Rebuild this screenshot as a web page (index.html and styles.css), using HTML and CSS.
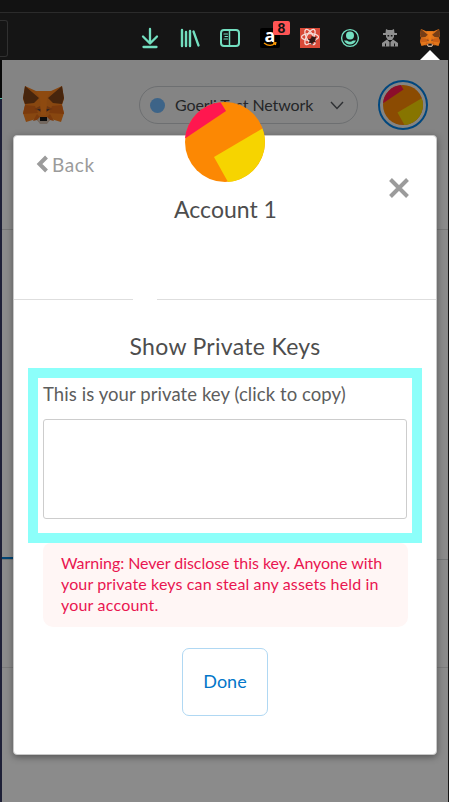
FILE: index.html
```html
<!DOCTYPE html>
<html lang="en">
<head>
<meta charset="utf-8">
<title>Show Private Keys</title>
<link rel="stylesheet" href="styles.css">
</head>
<body>
<svg class="defs" width="0" height="0">
  <symbol id="fox" viewBox="0 0 41 38" preserveAspectRatio="none">
    <path fill="#e2761b" d="M2 0 13 5H28L39 0 41 13 39 19 41 27 38 36 28 33 24 37H17L13 33 3 36 0 27 2 19 0 13Z"/>
    <path fill="#cd6116" d="M2 19 12 20 15 27 0 28ZM39 19 29 20 26 27 41 28ZM14 28 17 31 14 34 10 35ZM27 28 24 31 27 34 31 35Z"/>
    <path fill="#ec7c1b" d="M13 5H28L24 12 23 29H18L17 12Z"/>
    <path fill="#763d16" d="M2 0 16 12 11 17 2 18 0 12ZM39 0 25 12 30 17 39 18 41 12Z"/>
    <path fill="#b85a1c" d="M17 20 11 23 18 26ZM24 20 30 23 23 26Z"/>
    <path fill="#233447" d="M14 23 17.500 23.500 17 25ZM27 23 23.500 23.500 24 25Z"/>
    <path fill="#c0ad9e" d="M14 34 17 31H24L27 34 24 38H17Z"/>
    <path fill="#161616" d="M17 31H24V35H17Z"/>
  </symbol>
  <symbol id="avatar" viewBox="0 0 80 80">
    <circle cx="40" cy="40" r="40" fill="#fc8803"/>
    <path fill="#ff174f" d="M0 36.500A40 40 0 0 1 35.500 .2L41 9Z"/>
    <path fill="#f6d400" d="M77.500 26.500 29 55 43 80A40 40 0 0 0 77.500 26.500Z"/>
  </symbol>
</svg>

<header class="browser">
  <div class="tabs"></div>
  <div class="toolbar">
    <div class="urlbar"></div>
    <div class="tools">
      <svg width="20" height="22" viewBox="0 0 20 22" class="line"><path d="M10 2V16M3 9.500 10 16.500 17 9.500M3.500 20H16.500" stroke-width="2.300"/></svg>
      <svg width="20" height="22" viewBox="0 0 20 22" class="line"><path d="M2 3V19M6 5V19M10 4V19" stroke-width="2.400"/><path d="M13.500 4.500 18.500 18.500" stroke-width="2.300"/></svg>
      <svg width="20" height="22" viewBox="0 0 20 22" class="line thin"><rect x="1" y="3" width="18" height="16" rx="3"/><path d="M9.500 3V19" stroke-width="1.500"/><path d="M4 7H7.500M5 9.500H7.500M4 12H7.500" stroke-width="1.200"/></svg>
      <div class="amazon"><span class="letter">a</span><svg class="smile" width="14" height="5" viewBox="0 0 14 5"><path d="M1 1Q7 5.500 12 1.500M10 .8 12.800 .7 12.300 3" fill="none" stroke="#ff9900" stroke-width="1.300"/></svg><span class="badge">8</span></div>
      <svg width="20" height="22" viewBox="0 0 20 22"><path fill="#d94a38" d="M0 1H20V21H0Z"/><g fill="none" stroke="#f5dcd8" stroke-width="1.300"><ellipse cx="10" cy="10" rx="8.500" ry="3.400"/><ellipse cx="10" cy="10" rx="8.500" ry="3.400" transform="rotate(60 10 10)"/><ellipse cx="10" cy="10" rx="8.500" ry="3.400" transform="rotate(120 10 10)"/></g><ellipse cx="12.500" cy="13" rx="2.500" ry="3.700" fill="#301815" transform="rotate(40 12.500 13)"/><path d="M8 12 16 15M9 16 16 10M12 9V18" stroke="#301815"/></svg>
      <svg width="20" height="22" viewBox="0 0 20 22"><circle cx="10" cy="11" r="8.400" fill="none" stroke="#73dfc0" stroke-width="1.400"/><circle cx="10" cy="8.500" r="4" fill="#73dfc0"/><path fill="#73dfc0" d="M4 13.500H7Q10 16 13 13.500H16Q14 17.500 10 17.500T4 13.500Z"/></svg>
      <svg width="20" height="22" viewBox="0 0 20 22" fill="#919191"><path d="M6 2 8 3H12L14 2 14.500 6H17V8H14V10L12 13H8L6 10V8H3V6H5.500ZM7 12.500 9.500 15V19.500H2V16ZM13 12.500 10.500 15V19.500H18V16Z"/><path fill="#151515" d="M7.500 8H9.200V9.500H7.500ZM10.800 8H12.500V9.500H10.800ZM5 16.500H6V19.500H5ZM14 16.500H15V19.500H14Z"/></svg>
      <svg width="20" height="22"><use href="#fox" x="0" y="2" width="20" height="18"/></svg>
    </div>
    <svg class="pointer" width="20" height="10"><path fill="#fff" d="M10 0 20 10H0Z"/></svg>
  </div>
</header>

<main class="stage">
  <div class="desktop"></div>
  <section class="wallet">
    <div class="wallet-head">
      <svg class="logo" width="41" height="38"><use href="#fox"/></svg>
      <div class="network"><i class="dot"></i><span class="network-name">Goerli Test Network</span><svg width="14" height="9" viewBox="0 0 14 9"><path d="M1 1 7 7.500 13 1" fill="none" stroke="#2e3033" stroke-width="1.400"/></svg></div>
      <div class="ring"><svg width="40" height="40"><use href="#avatar"/></svg></div>
    </div>
    <div class="account-row"></div>
    <div class="balance"></div>
    <div class="tabline"></div>
    <div class="activity"></div>
    <div class="rest"></div>
  </section>

  <section class="modal">
    <svg class="avatar" width="80" height="80"><use href="#avatar"/></svg>
    <div class="modal-head">
      <div class="back"><svg width="13" height="18" viewBox="0 0 13 18"><path d="M10.500 2 3.500 9 10.500 16" fill="none" stroke="#9b9b9b" stroke-width="4"/></svg><span>Back</span></div>
      <svg class="close" width="20" height="20" viewBox="0 0 20 20"><path d="M1.500 1.500 18.500 18.500M18.500 1.500 1.500 18.500" stroke="#9b9b9b" stroke-width="4"/></svg>
    </div>
    <div class="account">Account 1</div>
    <div class="divider"><i></i><i></i></div>
    <h1 class="title">Show Private Keys</h1>
    <div class="keybox">
      <label class="label">This is your private key (click to copy)</label>
      <div class="key"></div>
    </div>
    <div class="warning"><span class="w1">Warning: Never disclose this key. Anyone with</span><span class="w2">your private keys can steal any assets held in</span><span class="w3">your account.</span></div>
    <button class="done">Done</button>
  </section>
</main>
</body>
</html>
```
FILE: styles.css
```css
* { box-sizing: border-box; }
body { margin: 0; width: 449px; height: 802px; overflow: hidden; background: #151515; font-family: Lato, "Liberation Sans", sans-serif; }
svg { display: block; flex: none; }
.defs { position: absolute; }
.browser { height: 60px; background: #151515; }
.tabs { height: 13px; background: #121212; border-bottom: 1px solid #2b2b2b; }
.toolbar { position: relative; height: 47px; display: flex; justify-content: space-between; padding-top: 7px; }
.urlbar { width: 8px; height: 37px; border: 1px solid #303030; border-left: 0; border-radius: 0 3px 3px 0; }
.tools { display: flex; gap: 20px; padding: 7px 9px 0 0; }
.line { fill: none; stroke: #73dfc0; stroke-width: 2; stroke-linecap: round; stroke-linejoin: round; }
.thin { stroke-width: 2; }
.amazon { position: relative; width: 20px; height: 20px; margin-top: 1px; background: #000; border-radius: 2px; color: #fff; text-align: center; }
.letter { display: block; font: bold 18px/15px "Open Sans", sans-serif; }
.smile { margin: -1px auto 0; }
.badge { position: absolute; left: 13px; top: -7px; width: 17px; height: 14px; background: #ff5555; border-radius: 2px; color: #111; font: bold 14px/14px "Liberation Sans", sans-serif; }
.pointer { position: absolute; right: 9px; bottom: 0; }

.stage { position: relative; display: flex; height: 742px; }
.desktop { width: 2px; background: linear-gradient(#080808 38px, #58bfa5 38px, #58bfa5 39px, #1e2037 39px); }
.wallet { width: 446px; background: #8b8b8b; }
.wallet-head { height: 90px; display: flex; align-items: center; padding: 0 20px 0 21px; background: #848484; }
.logo { filter: brightness(.6); }
.network { width: 219px; height: 38px; margin-left: 75px; display: flex; align-items: center; padding: 0 13px 0 10px; border: 1px solid #6d6f71; border-radius: 19px; }
.dot { width: 15px; height: 15px; border-radius: 50%; background: #3d6488; }
.network-name { flex: 1; margin-left: 10px; font: 16px/20px Lato, sans-serif; letter-spacing: -.12px; color: #242628; white-space: nowrap; }
.ring { width: 50px; height: 50px; margin-left: auto; padding: 3px; border: 2px solid #00477e; border-radius: 50%; }
.ring svg { filter: brightness(.55); }
.account-row { height: 80px; border-bottom: 1px solid #787878; }
.balance { height: 327px; }
.tabline { height: 3px; border-bottom: 1px solid #747677; background: linear-gradient(90deg, #004575 60px, transparent 60px); }
.activity { height: 108px; border-bottom: 1px solid #7b7b7b; }

.modal { position: absolute; left: 13px; top: 75px; width: 424px; height: 620px; display: flex; flex-direction: column; background: #fff; border: 1px solid #c8c8c8; border-radius: 4px; box-shadow: 0 2px 7px rgba(0,0,0,.4); color: #4d4d4d; }
.avatar { position: absolute; left: 171px; top: -34px; }
.modal-head { height: 61px; display: flex; justify-content: space-between; padding: 19px 27px 0 22px; }
.back { display: flex; align-items: center; gap: 3px; height: 18px; font-size: 19px; color: #9b9b9b; letter-spacing: .6px; }
.close { margin-top: 22.5px; }
.account { height: 102px; padding-left: 1px; text-align: center; font-size: 23px; line-height: 25px; letter-spacing: 0; }
.divider { display: flex; justify-content: space-between; height: 1px; }
.divider i { height: 1px; background: #dedede; width: 119px; }
.divider i:last-child { width: 279px; }
.title { margin: 33px 0 8px; text-align: center; font-size: 23px; font-weight: 400; line-height: 27px; letter-spacing: .3px; white-space: nowrap; }
.keybox { width: 394px; height: 175px; margin-left: 14px; padding: 4px 5px 0; border: 10px solid #8cfffa; color: #5d5d5d; }
.label { display: block; height: 24px; line-height: 24px; font-size: 18.5px; letter-spacing: .08px; white-space: nowrap; }
.key { width: 364px; height: 100px; margin-top: 13px; border: 1px solid #cdcdcd; border-radius: 3px; }
.warning { width: 365px; height: 84px; margin-left: 29px; padding: 9px 18px; background: #fff6f5; border-radius: 8px 8px 10px 10px; color: #e91550; font-size: 16px; line-height: 21px; }
.warning span { display: block; white-space: nowrap; }
.w1 { letter-spacing: -.04px; }
.w2 { letter-spacing: .13px; }
.w3 { letter-spacing: .2px; }
.done { align-self: center; width: 86px; height: 68px; margin-top: 21px; padding: 0 0 2px; background: #fff; border: 1px solid #b0d8f3; border-radius: 7px; color: #0376c9; font: 18px/24px Lato, sans-serif; }
```
